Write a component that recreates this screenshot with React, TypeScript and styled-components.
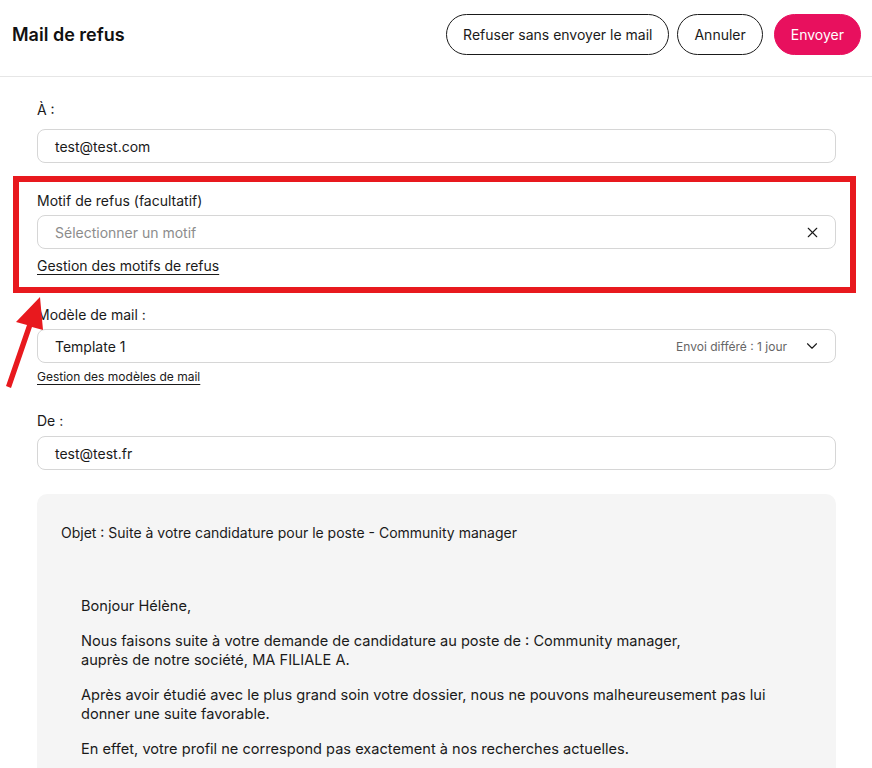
import React from "react";
import styled, { createGlobalStyle } from "styled-components";
import { X, ChevronDown } from "lucide-react";

const GlobalStyle = createGlobalStyle`
  html, body {
    margin: 0;
    padding: 0;
    background: #ffffff;
  }
  body {
    font-family: Inter, "Noto Sans", sans-serif;
    color: #1a1a1a;
  }
`;

const Page = styled.div`
  position: relative;
  width: 872px;
  min-height: 768px;
  overflow: hidden;
`;

const Header = styled.header`
  height: 77px;
  box-sizing: border-box;
  display: flex;
  align-items: center;
  justify-content: space-between;
  padding: 0 11px 7px 12px;
  border-bottom: 1px solid #e6e6e6;
`;

const Title = styled.h1`
  margin: 0;
  font-size: 18px;
  font-weight: 600;
  color: #111;
`;

const Actions = styled.div`
  display: flex;
  align-items: center;
  gap: 8px;
`;

const Button = styled.button<{ $primary?: boolean }>`
  height: 41px;
  padding: 0 16px;
  border-radius: 999px;
  font-family: inherit;
  font-size: 14px;
  border: 1px solid ${(p) => (p.$primary ? "#e8105e" : "#1a1a1a")};
  background: ${(p) => (p.$primary ? "#e8105e" : "#ffffff")};
  color: ${(p) => (p.$primary ? "#ffffff" : "#1a1a1a")};
  margin-left: ${(p) => (p.$primary ? "3px" : "0")};
`;

const Form = styled.div`
  padding: 23px 36px 0 37px;
  display: flex;
  flex-direction: column;
`;

const Field = styled.div<{ $top?: number }>`
  display: flex;
  flex-direction: column;
  margin-top: ${(p) => p.$top ?? 0}px;
`;

const Label = styled.label<{ $gap?: number }>`
  font-size: 14px;
  line-height: 20px;
  margin-bottom: ${(p) => p.$gap ?? 9}px;
  color: #1a1a1a;
`;

const Input = styled.div<{ $placeholder?: boolean }>`
  height: 34px;
  box-sizing: border-box;
  border: 1px solid #d6d6d6;
  border-radius: 8px;
  display: flex;
  align-items: center;
  padding: 0 14px 0 17px;
  font-size: 14px;
  color: ${(p) => (p.$placeholder ? "#8c8c8c" : "#1a1a1a")};
`;

const InputText = styled.span`
  flex: 1;
`;

const Hint = styled.span`
  font-size: 12px;
  color: #666;
  margin-right: 16px;
`;

const ManageLink = styled.a<{ $small?: boolean }>`
  align-self: flex-start;
  margin-top: ${(p) => (p.$small ? 6 : 7)}px;
  font-size: ${(p) => (p.$small ? 12 : 14)}px;
  line-height: ${(p) => (p.$small ? 16 : 20)}px;
  color: #1a1a1a;
  text-decoration: underline;
  text-underline-offset: 3px;
`;

const Highlight = styled.div`
  position: relative;
  margin-top: 13px;
  padding: 15px 0 17px;
  &::before {
    content: "";
    position: absolute;
    top: 0;
    bottom: 0;
    left: -24px;
    right: -20px;
    border: 6px solid #e8191e;
    pointer-events: none;
  }
`;

const Preview = styled.div`
  margin-top: 24px;
  background: #f5f5f5;
  border-radius: 10px;
  padding: 29px 24px 40px;
  font-size: 14px;
  line-height: 19px;
  color: #1a1a1a;
`;

const Subject = styled.p`
  margin: 0 0 55px;
`;

const Body = styled.div`
  padding-left: 20px;
  font-size: 14.6px;
  p {
    margin: 0 0 16px;
  }
`;

const Arrow = styled.svg`
  position: absolute;
  left: 0;
  top: 290px;
  pointer-events: none;
`;

const App = () => {
  return (
    <Page>
      <GlobalStyle />
      <Header>
        <Title>Mail de refus</Title>
        <Actions>
          <Button>Refuser sans envoyer le mail</Button>
          <Button>Annuler</Button>
          <Button $primary>Envoyer</Button>
        </Actions>
      </Header>
      <Form>
        <Field>
          <Label $gap={9}>À :</Label>
          <Input>test@test.com</Input>
        </Field>
        <Highlight>
          <Field>
            <Label $gap={4}>Motif de refus (facultatif)</Label>
            <Input $placeholder>
              <InputText>Sélectionner un motif</InputText>
              <X size={17} color="#1a1a1a" strokeWidth={1.5} />
            </Input>
            <ManageLink>Gestion des motifs de refus</ManageLink>
          </Field>
        </Highlight>
        <Field $top={12}>
          <Label $gap={4}>Modèle de mail :</Label>
          <Input>
            <InputText>Template 1</InputText>
            <Hint>Envoi différé : 1 jour</Hint>
            <ChevronDown size={18} color="#1a1a1a" strokeWidth={1.5} />
          </Input>
          <ManageLink $small>Gestion des modèles de mail</ManageLink>
        </Field>
        <Field $top={26}>
          <Label $gap={5}>De :</Label>
          <Input>test@test.fr</Input>
        </Field>
        <Preview>
          <Subject>Objet : Suite à votre candidature pour le poste - Community manager</Subject>
          <Body>
            <p>Bonjour Hélène,</p>
            <p>
              Nous faisons suite à votre demande de candidature au poste de : Community manager,
              <br />
              auprès de notre société, MA FILIALE A.
            </p>
            <p>
              Après avoir étudié avec le plus grand soin votre dossier, nous ne pouvons malheureusement pas lui
              <br />
              donner une suite favorable.
            </p>
            <p>En effet, votre profil ne correspond pas exactement à nos recherches actuelles.</p>
          </Body>
        </Preview>
      </Form>
      <Arrow width="60" height="110" viewBox="0 0 60 110">
        <polygon points="40,7 16,32 27,35 6,96 11,98 32,37 43,40" fill="#e8191e" />
      </Arrow>
    </Page>
  );
};

export default App;
